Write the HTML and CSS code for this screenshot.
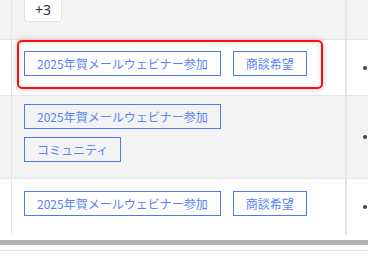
FILE: index.html
```html
<!DOCTYPE html>
<html lang="ja">
  <head>
    <meta charset="utf-8">
    <link rel="stylesheet" href="styles.css">
  </head>
  <body>
    <div class="grid">
      <div class="row row-top shaded">
        <div class="cell-side"></div>
        <div class="cell-main">
          <button class="more">+3</button>
        </div>
        <div class="cell-end"></div>
      </div>
      <div class="row highlighted">
        <div class="cell-side"></div>
        <div class="cell-main">
          <div class="tags">
            <span class="tag">2025年賀メールウェビナー参加</span>
            <span class="tag">商談希望</span>
          </div>
          <div class="focus-ring"></div>
        </div>
        <div class="cell-end"><span class="dot"></span></div>
      </div>
      <div class="row shaded">
        <div class="cell-side"></div>
        <div class="cell-main">
          <div class="tags">
            <span class="tag">2025年賀メールウェビナー参加</span>
            <span class="tag">コミュニティ</span>
          </div>
        </div>
        <div class="cell-end"><span class="dot"></span></div>
      </div>
      <div class="row row-last">
        <div class="cell-side"></div>
        <div class="cell-main">
          <div class="tags">
            <span class="tag">2025年賀メールウェビナー参加</span>
            <span class="tag">商談希望</span>
          </div>
        </div>
        <div class="cell-end"><span class="dot"></span></div>
      </div>
    </div>
    <div class="scrollbar"></div>
    <div class="footer-line"></div>
  </body>
</html>
```

FILE: styles.css
```css
html, body {
  margin: 0;
  padding: 0;
}
body {
  --border-color: #e6e6e6;
  --shade: #f3f3f3;
  --tag-color: #4b7bf0;
  width: 368px;
  height: 277px;
  overflow: hidden;
  background: #fff;
  font-family: "Noto Sans CJK JP", "Noto Sans", sans-serif;
  color: #333;
}

.grid {
  display: flex;
  flex-direction: column;
}
.row {
  display: flex;
  border-bottom: 1px solid var(--border-color);
}
.row.shaded {
  background: var(--shade);
}
.row-top {
  height: 39px;
}
.highlighted {
  height: 55px;
}
.row-last {
  height: 56px;
  border-bottom: none;
}

.cell-side {
  width: 11px;
  flex-shrink: 0;
  border-right: 1px solid var(--border-color);
}
.cell-main {
  position: relative;
  width: 309px;
  flex-shrink: 0;
  padding: 8px 12px;
  display: flex;
  align-items: center;
  border-right: 2px solid var(--border-color);
}
.row-top .cell-main {
  padding: 0 12px;
  align-items: flex-start;
}
.cell-end {
  flex: 1;
  display: flex;
  align-items: center;
}

.more {
  margin-top: -3px;
  width: 38px;
  height: 25px;
  padding: 0;
  background: #fff;
  border: 1px solid #e3e3e3;
  border-radius: 3px;
  font-family: "Noto Sans", sans-serif;
  font-size: 14px;
  color: #2b2f38;
}

.tags {
  width: 300px;
  display: flex;
  flex-wrap: wrap;
  column-gap: 12px;
}
.tag {
  display: block;
  margin-bottom: 8px;
  padding: 0 12px;
  border: 1px solid var(--tag-color);
  color: #5883f2;
  font-size: 12px;
  line-height: 23px;
  white-space: nowrap;
}

.focus-ring {
  position: absolute;
  left: 5px;
  top: 0;
  width: 302px;
  height: 45px;
  border: 2px solid #ff0d0d;
  border-radius: 5px;
  box-shadow: 0 0 6px rgba(0, 0, 0, 0.22), inset 0 0 6px rgba(0, 0, 0, 0.12);
  pointer-events: none;
}

.dot {
  width: 4px;
  height: 4px;
  margin-left: 16px;
  border-radius: 50%;
  background: #3d4352;
}

.scrollbar {
  margin-top: 5px;
  height: 5px;
  background: #b3b3b3;
}
.footer-line {
  margin-top: 5px;
  height: 1px;
  background: #e2e2e2;
}
```
